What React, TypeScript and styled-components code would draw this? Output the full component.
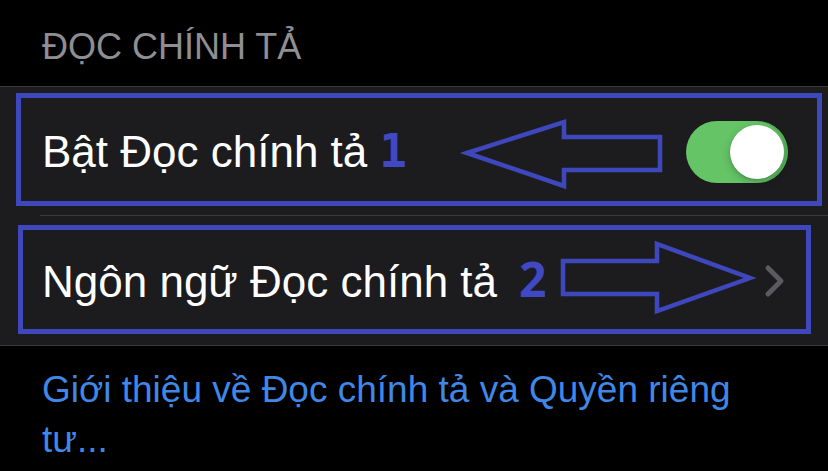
import styled, { createGlobalStyle } from "styled-components";

const GlobalStyle = createGlobalStyle`
  html, body {
    margin: 0;
    padding: 0;
    background: #000;
  }
  body {
    font-family: "Liberation Sans", Arial, sans-serif;
    -webkit-font-smoothing: antialiased;
  }
`;

const Page = styled.div`
  width: 828px;
  height: 471px;
  overflow: hidden;
  background: #000;
`;

const SectionHeader = styled.div`
  padding: 25px 42px 17px;
  font-size: 36px;
  line-height: 44px;
  color: #8e8e93;
  white-space: nowrap;
`;

const Group = styled.div`
  background: #1c1c1e;
  border-top: 1px solid #3a3a3c;
  border-bottom: 1px solid #3a3a3c;
`;

const Row = styled.div<{ $divider?: boolean }>`
  position: relative;
  display: flex;
  align-items: center;
  height: 129px;
  padding: 0 40px 0 42px;

  ${(p) =>
    p.$divider &&
    `
    &::after {
      content: "";
      position: absolute;
      left: 40px;
      right: 0;
      bottom: 0;
      height: 1px;
      background: #3a3a3c;
    }
  `}
`;

const Label = styled.div`
  flex: 1;
  font-size: 44px;
  line-height: 44px;
  color: #fff;
  white-space: nowrap;
`;

const Marker = styled.span<{ $mono?: boolean }>`
  margin-left: ${(p) => (p.$mono ? "12px" : "22px")};
  font-family: ${(p) =>
    p.$mono ? `"DejaVu Sans Mono", monospace` : `"Open Sans", sans-serif`};
  font-weight: 700;
  font-size: ${(p) => (p.$mono ? "46px" : "48px")};
  color: #4048c4;
`;

const Toggle = styled.div<{ $on: boolean }>`
  position: relative;
  width: 102px;
  height: 62px;
  border-radius: 31px;
  background: ${(p) => (p.$on ? "#65c466" : "#39393d")};
  box-shadow: inset -3px 0 0 rgba(40, 120, 50, 0.25);
  flex-shrink: 0;
`;

const Knob = styled.div<{ $on: boolean }>`
  position: absolute;
  top: 4px;
  left: ${(p) => (p.$on ? "44px" : "4px")};
  width: 54px;
  height: 54px;
  border-radius: 50%;
  background: #fff;
  box-shadow: 0 3px 8px rgba(0, 0, 0, 0.22), 0 1px 2px rgba(0, 0, 0, 0.15);
`;

const Chevron = styled.svg`
  width: 22px;
  height: 34px;
  margin-right: 2px;
  flex-shrink: 0;
`;

// blue call-out frames and arrows drawn over the rows
const Callout = styled.div<{ $left: number; $top: number; $w: number; $h: number }>`
  position: absolute;
  left: ${(p) => p.$left}px;
  top: ${(p) => p.$top}px;
  width: ${(p) => p.$w}px;
  height: ${(p) => p.$h}px;
  box-sizing: border-box;
  border: 5px solid #3f47bd;
  pointer-events: none;
`;

const ArrowLayer = styled.svg`
  position: absolute;
  left: 0;
  top: 0;
  width: 828px;
  height: 129px;
  pointer-events: none;
`;

const Footer = styled.div`
  padding: 19px 42px 0;
  font-size: 37px;
  line-height: 50px;
  color: #4088e8;
`;

export default function App() {
  return (
    <Page>
      <GlobalStyle />
      <SectionHeader>ĐỌC CHÍNH TẢ</SectionHeader>
      <Group>
        <Row $divider>
          <Label>
            Bật Đọc chính tả
            <Marker $mono>1</Marker>
          </Label>
          <Toggle $on>
            <Knob $on />
          </Toggle>
          <Callout $left={16} $top={6} $w={806} $h={113} />
          <ArrowLayer viewBox="0 0 828 129">
            <polygon
              points="467,66 564,35 564,50 660,50 660,83 564,83 564,99"
              fill="none"
              stroke="#3f47bd"
              strokeWidth="4.5"
              strokeLinejoin="miter"
            />
          </ArrowLayer>
        </Row>
        <Row>
          <Label>
            Ngôn ngữ Đọc chính tả
            <Marker>2</Marker>
          </Label>
          <Chevron viewBox="0 0 22 34">
            <polyline
              points="4,4 17,17 4,30"
              fill="none"
              stroke="#5a5a5f"
              strokeWidth="5"
              strokeLinecap="round"
              strokeLinejoin="round"
            />
          </Chevron>
          <Callout $left={18} $top={9} $w={793} $h={109} />
          <ArrowLayer viewBox="0 0 828 129">
            <polygon
              points="563,45 657,45 657,28 750,62 657,95 657,78 563,78"
              fill="none"
              stroke="#3f47bd"
              strokeWidth="4.5"
              strokeLinejoin="miter"
            />
          </ArrowLayer>
        </Row>
      </Group>
      <Footer>Giới thiệu về Đọc chính tả và Quyền riêng tư...</Footer>
    </Page>
  );
}
